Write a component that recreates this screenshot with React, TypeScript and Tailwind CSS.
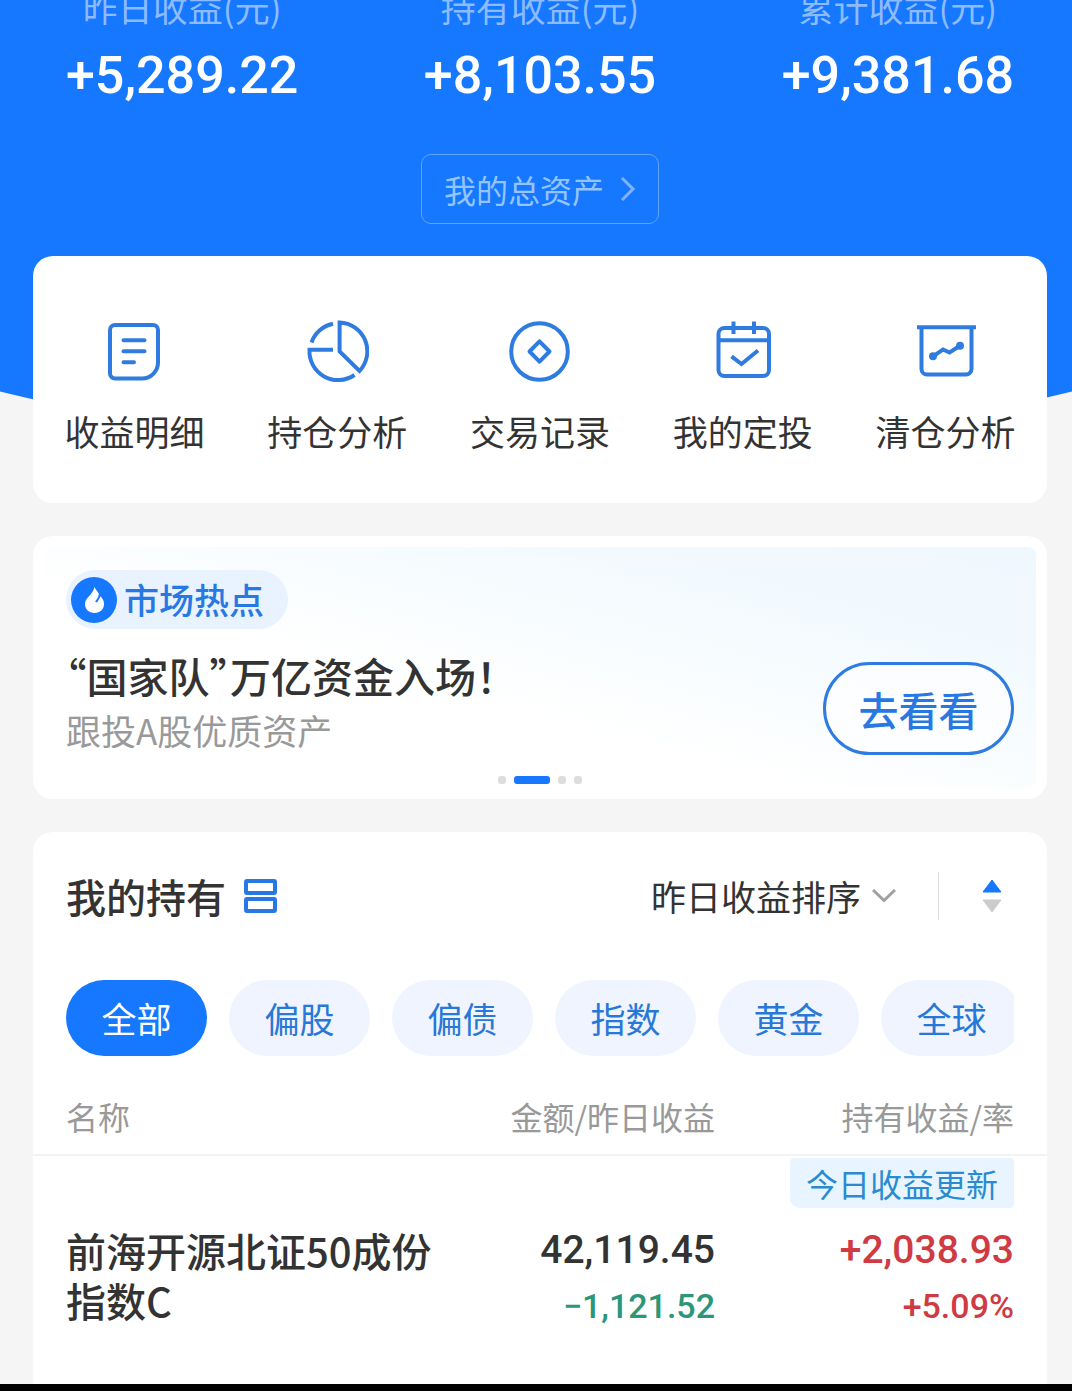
import { useState, type ReactNode } from "react";

const SUMMARY = [
  { label: "昨日收益(元)", value: "+5,289.22" },
  { label: "持有收益(元)", value: "+8,103.55" },
  { label: "累计收益(元)", value: "+9,381.68" },
];

const FILTERS = ["全部", "偏股", "偏债", "指数", "黄金", "全球"];

const SORT_OPTIONS = ["昨日收益排序", "持有收益排序", "持有金额排序"];

const HOLDINGS = [
  {
    name: "前海开源北证50成份指数C",
    amount: "42,119.45",
    dayProfit: "−1,121.52",
    profit: "+2,038.93",
    rate: "+5.09%",
    tag: "今日收益更新",
  },
];

const SLIDES = [0, 1, 2, 3];

function Icon({ children }: { children: ReactNode }) {
  return (
    <svg viewBox="0 0 64 64" className="size-16" fill="none" stroke="#2f7be0" strokeWidth="4" aria-hidden="true">
      {children}
    </svg>
  );
}

const ACTIONS = [
  {
    label: "收益明细",
    icon: (
      <Icon>
        <path d="M13 6h38a5 5 0 0 1 5 5v32.500a16 16 0 0 1-16 16H13a5 5 0 0 1-5-5V11a5 5 0 0 1 5-5z" />
        <path d="M21.500 21.300h21M21.500 32.300h21M21.500 43.200h10.500" strokeLinecap="round" />
      </Icon>
    ),
  },
  {
    label: "持仓分析",
    icon: (
      <Icon>
        <path d="M34.600 3.500V32.500L54.500 52A28.800 28.800 0 0 0 34.600 3.500z" />
        <path d="M28 30.700H4.500A28.700 28.700 0 0 0 49.500 56" />
        <path d="M28 4.700A28.700 28.700 0 0 0 6.500 23.500" />
      </Icon>
    ),
  },
  {
    label: "交易记录",
    icon: (
      <Icon>
        <circle cx="31.500" cy="32.500" r="28.300" />
        <path d="M31.500 22.300L41.500 32.500L31.500 42.700L21.500 32.500z" strokeLinejoin="round" />
      </Icon>
    ),
  },
  {
    label: "我的定投",
    icon: (
      <Icon>
        <rect x="7.500" y="9" width="50.500" height="48" rx="6" />
        <path d="M7.500 21.300H58M22.500 2.500v12.500M43 2.500v12.500" />
        <path d="M20.500 37.300L30.500 45L47 31.500" />
      </Icon>
    ),
  },
  {
    label: "清仓分析",
    icon: (
      <Icon>
        <path d="M3 8.300H62" />
        <path d="M7.500 8.300V50a5.500 5.500 0 0 0 5.500 5.500H52a5.500 5.500 0 0 0 5.500-5.500V8.300" />
        <path d="M19 37.300L29 30.500L35.500 33.500L46 26.700" />
        <circle cx="19" cy="37.300" r="4" fill="#2f7be0" stroke="none" />
        <circle cx="46" cy="26.700" r="4" fill="#2f7be0" stroke="none" />
      </Icon>
    ),
  },
];

function Summary() {
  return (
    <header className="px-[33px] text-center">
      <dl className="flex justify-between">
        {SUMMARY.map((item) => (
          <div key={item.label}>
            <dt className="text-[35px] leading-[14px] text-[#8cbcff]">{item.label}</dt>
            <dd className="mt-8 font-[Roboto,sans-serif] text-[52px] leading-[60px] font-medium text-white">{item.value}</dd>
          </div>
        ))}
      </dl>
      <button
        type="button"
        className="mt-12 inline-flex h-[70px] items-center gap-4 rounded-[10px] border border-[#60a5fb] px-[22px] text-[32px] text-[#93c4fd]"
      >
        我的总资产
        <svg viewBox="0 0 16 26" className="h-[26px] w-4" fill="none" stroke="#7fb2fb" strokeWidth="3" aria-hidden="true">
          <path d="M2 2l11 11L2 24" />
        </svg>
      </button>
    </header>
  );
}

function QuickActions() {
  return (
    <nav className="grid grid-cols-5 rounded-[20px] bg-white pt-[63px] pb-[46px]">
      {ACTIONS.map((action) => (
        <a key={action.label} href="#" className="flex flex-col items-center gap-[22px] text-[35px] leading-[52px] text-[#333]">
          {action.icon}
          {action.label}
        </a>
      ))}
    </nav>
  );
}

function HotTopic() {
  const [active] = useState(1);

  return (
    <section className="rounded-[20px] bg-white p-[11px]">
      <div className="rounded-lg bg-[linear-gradient(195deg,#eff7ff_0%,#f3fafe_25%,#ffffff_62%)] px-[22px] pt-[23px]">
        <div className="flex items-end justify-between">
          <div>
            <div className="inline-flex h-[59px] items-center gap-[7px] rounded-full bg-[#e9f2ff] pr-6 pl-[5px] text-[35px] font-medium text-[#2878e4]">
              <svg viewBox="0 0 46 46" className="size-[46px]" aria-hidden="true">
                <circle cx="23" cy="23" r="23" fill="#1677ff" />
                <path
                  d="M23.500 10C24.500 13 27.500 15 28.500 18.500C31.500 21 33 23.500 33 27C33 32.500 29 36 23.500 36C18 36 14 32.500 14 27C14 20.500 21.500 18.500 23.500 10z"
                  fill="#fff"
                />
                <path d="M28.500 17.500C29 20.500 27 22 25 25" fill="none" stroke="#1677ff" strokeWidth="2" />
              </svg>
              市场热点
            </div>
            <h2 className="mt-4 text-[41px] leading-[60px] font-medium text-[#333] [font-feature-settings:'halt']">
              “国家队”万亿资金入场！
            </h2>
            <p className="text-[35px] leading-[50px] text-[#999]">跟投A股优质资产</p>
          </div>
          <button
            type="button"
            className="h-[93px] w-[191px] rounded-full border-3 border-[#2f7be0] bg-white/60 text-[40px] font-medium text-[#2878e4]"
          >
            去看看
          </button>
        </div>
        <div className="flex justify-center gap-2 pt-[21px] pb-1">
          {SLIDES.map((slide) => (
            <span key={slide} className={slide === active ? "h-2 w-9 rounded-[3px] bg-[#1677ff]" : "size-2 rounded-[3px] bg-[#ddd]"} />
          ))}
        </div>
      </div>
    </section>
  );
}

function HoldingsTable() {
  return (
    <table className="w-full table-fixed text-[32px]">
      <colgroup>
        <col />
        <col className="w-[215px]" />
        <col className="w-[332px]" />
      </colgroup>
      <thead>
        <tr className="h-[78px] border-b-2 border-[#f3f3f3] text-[#999]">
          <th className="pl-[33px] text-left font-normal">名称</th>
          <th className="text-right font-normal whitespace-nowrap">金额/昨日收益</th>
          <th className="pr-[33px] text-right font-normal whitespace-nowrap">持有收益/率</th>
        </tr>
      </thead>
      <tbody>
        {HOLDINGS.map((item) => (
          <tr key={item.name} className="align-top">
            <td className="pt-[69px] pr-10 pl-[33px] text-[40px] leading-[50px] font-medium text-[#333]">{item.name}</td>
            <td className="pt-[66px] text-right font-[Roboto,sans-serif] font-medium">
              <div className="text-[39px] leading-[56px] text-[#333]">{item.amount}</div>
              <div className="text-[34px] leading-[56px] text-[#2c9678]">{item.dayProfit}</div>
            </td>
            <td className="pt-[2px] pr-[33px] text-right font-[Roboto,sans-serif] font-medium text-[#d03a42]">
              <div className="ml-auto flex h-[50px] w-fit items-center rounded-sm rounded-bl-[10px] bg-[#e8f4ff] px-4 font-['Noto_Sans_CJK_SC',sans-serif] font-normal text-[#2a8bd0]">
                {item.tag}
              </div>
              <div className="mt-[14px] text-[39px] leading-[56px]">{item.profit}</div>
              <div className="text-[34px] leading-[56px]">{item.rate}</div>
            </td>
          </tr>
        ))}
      </tbody>
    </table>
  );
}

function Holdings() {
  const [filter, setFilter] = useState("全部");
  const [ascending, setAscending] = useState(true);

  return (
    <section className="rounded-t-[20px] bg-white pt-9 pb-[50px]">
      <div className="flex items-center justify-between pr-[45px] pl-[33px]">
        <div className="flex items-center gap-[18px]">
          <h2 className="text-[40px] leading-[56px] font-medium text-[#333]">我的持有</h2>
          <button type="button" aria-label="切换视图">
            <svg viewBox="0 0 33 34" className="h-[34px] w-[33px]" fill="none" stroke="#2878e4" strokeWidth="4" aria-hidden="true">
              <rect x="2" y="2" width="29" height="12" rx="1" />
              <rect x="2" y="20" width="29" height="12" rx="1" />
            </svg>
          </button>
        </div>
        <div className="flex items-center">
          <label className="flex items-center text-[#333]">
            <span className="sr-only">排序方式</span>
            <select className="appearance-none bg-transparent text-[35px] leading-[52px] outline-none">
              {SORT_OPTIONS.map((option) => (
                <option key={option}>{option}</option>
              ))}
            </select>
            <svg viewBox="0 0 24 14" className="ml-[10px] h-[14px] w-6" fill="none" stroke="#a0a0a0" strokeWidth="3" aria-hidden="true">
              <path d="M1 1l11 10.500L23 1" />
            </svg>
          </label>
          <span className="ml-[42px] h-12 w-px bg-[#ddd]" />
          <button type="button" aria-label="切换升降序" className="ml-[43px]" onClick={() => setAscending(!ascending)}>
            <svg viewBox="0 0 20 34" className="h-[34px] w-5" aria-hidden="true">
              <path d="M10 1L19 13H1z" fill={ascending ? "#1677ff" : "#ccc"} stroke={ascending ? "#1677ff" : "#ccc"} strokeLinejoin="round" />
              <path d="M10 33L19 21H1z" fill={ascending ? "#ccc" : "#1677ff"} stroke={ascending ? "#ccc" : "#1677ff"} strokeLinejoin="round" />
            </svg>
          </button>
        </div>
      </div>

      <div className="mx-[33px] mt-14 flex gap-[22px] overflow-hidden">
        {FILTERS.map((name) => (
          <button
            key={name}
            type="button"
            onClick={() => setFilter(name)}
            className={`h-[76px] w-[141px] shrink-0 rounded-full text-[35px] ${
              name === filter ? "bg-[#1677ff] text-white" : "bg-[#eff4ff] text-[#2878d8]"
            }`}
          >
            {name}
          </button>
        ))}
      </div>

      <div className="mt-[21px]">
        <HoldingsTable />
      </div>
    </section>
  );
}

export default function App() {
  return (
    <div className="relative isolate overflow-hidden bg-[#f5f5f5] font-['Noto_Sans_CJK_SC',sans-serif]">
      <div className="absolute inset-x-0 top-0 -z-10 h-[452px] bg-[#1677ff] [clip-path:ellipse(100%_100%_at_50%_0)]" />
      <main className="pr-[25px] pl-[33px]">
        <Summary />
        <div className="mt-8 flex flex-col gap-[33px]">
          <QuickActions />
          <HotTopic />
          <Holdings />
        </div>
      </main>
      <div className="h-[7px] bg-black" />
    </div>
  );
}
